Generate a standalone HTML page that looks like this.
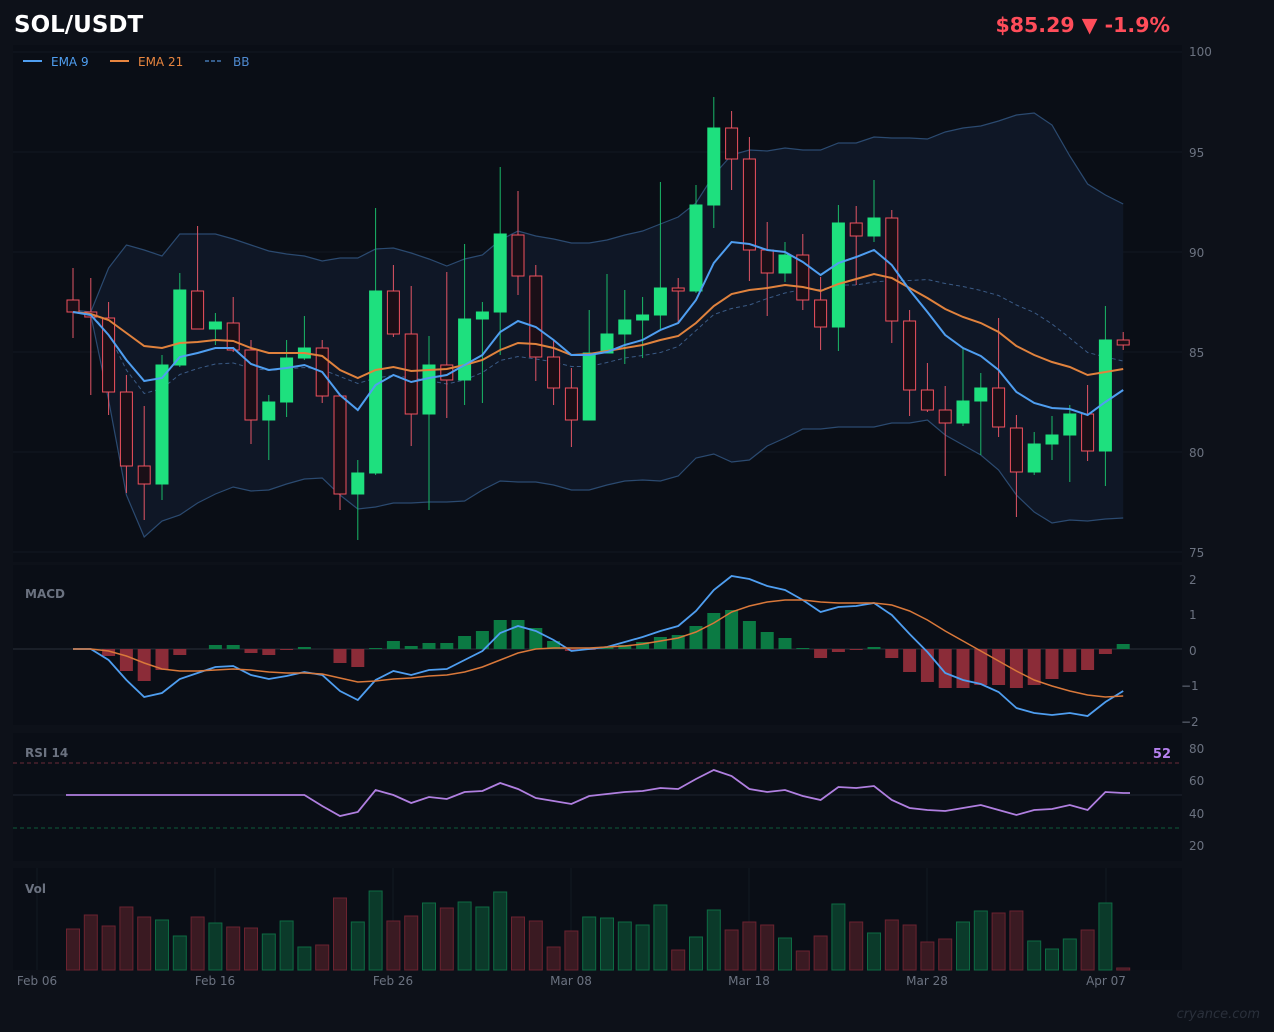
<!DOCTYPE html>
<html><head><meta charset="utf-8"><style>
html,body{margin:0;padding:0;background:#0d1119;}
body{width:1274px;height:1032px;overflow:hidden;position:relative;font-family:"Liberation Sans","DejaVu Sans",sans-serif;}
svg{position:absolute;left:0;top:0;}
</style></head><body>
<svg id="s" width="1274" height="1032" xmlns="http://www.w3.org/2000/svg" font-family="DejaVu Sans, Liberation Sans, sans-serif">
<rect x="0" y="0" width="1274" height="1032" fill="#0d1119"/>
<rect x="13" y="45" width="1169" height="517" fill="#0a0e16"/>
<rect x="13" y="565" width="1169" height="160" fill="#0a0e16"/>
<rect x="13" y="733" width="1169" height="128" fill="#0a0e16"/>
<rect x="13" y="868" width="1169" height="102" fill="#0a0e16"/>
<g id="grid"></g>
<g id="bb"></g>
<g id="cd"></g>
<g id="mac"></g>
<g id="rsi"></g>
<g id="vol"></g>
<text x="14" y="32" fill="#ffffff" font-size="23" font-weight="bold">SOL/USDT</text>
<text x="1170" y="32" fill="#ff4d5a" font-size="20.5" font-weight="bold" text-anchor="end">$85.29 ▼ -1.9%</text>
<line x1="23" y1="61" x2="42" y2="61" stroke="#4f9ef0" stroke-width="2"/>
<text x="51" y="66" fill="#4f9ef0" font-size="12">EMA 9</text>
<line x1="110" y1="61" x2="129" y2="61" stroke="#e8853f" stroke-width="2"/>
<text x="138" y="66" fill="#e8853f" font-size="12">EMA 21</text>
<line x1="205" y1="61" x2="223" y2="61" stroke="#4f8ad0" stroke-width="1.3" stroke-dasharray="4 2"/>
<text x="233" y="66" fill="#4f8ad0" font-size="12">BB</text>
<g fill="#6b7280" font-size="12">
<text x="1189" y="56">100</text><text x="1189" y="157">95</text><text x="1189" y="257">90</text><text x="1189" y="357">85</text><text x="1189" y="457">80</text><text x="1189" y="557">75</text>
<text x="1189" y="584">2</text><text x="1189" y="619">1</text><text x="1189" y="655">0</text><text x="1181" y="690">−1</text><text x="1181" y="726">−2</text>
<text x="1189" y="753">80</text><text x="1189" y="785">60</text><text x="1189" y="818">40</text><text x="1189" y="850">20</text>
<text x="37" y="985" text-anchor="middle">Feb 06</text><text x="215" y="985" text-anchor="middle">Feb 16</text><text x="393" y="985" text-anchor="middle">Feb 26</text><text x="571" y="985" text-anchor="middle">Mar 08</text><text x="749" y="985" text-anchor="middle">Mar 18</text><text x="927" y="985" text-anchor="middle">Mar 28</text><text x="1106" y="985" text-anchor="middle">Apr 07</text>
</g>
<g fill="#6b7280" font-size="12" font-weight="bold">
<text x="25" y="598">MACD</text><text x="25" y="757">RSI 14</text><text x="25" y="893">Vol</text>
</g>
<text x="1171" y="758" fill="#b681ef" font-size="13" font-weight="bold" text-anchor="end">52</text>
<text x="1260" y="1018" fill="#2a303b" font-size="13" font-style="italic" text-anchor="end">cryance.com</text>
</svg>
<script>
const X=i=>73+i*17.8;
const C=[[300,312,268,338,0],[312,317,278,395,0],[318,392,302,415,0],[392,466,375,493,0],[466,484,406,520,0],[365,484,355,500,1],[290,365,273,367,1],[291,329,226,329,0],[322,329,313,345,1],[323,350,297,352,0],[350,420,340,444,0],[402,420,395,460,1],[358,402,340,417,1],[348,358,316,360,1],[348,396,340,403,0],[396,494,394,510,0],[473,494,460,540,1],[291,473,208,475,1],[291,334,265,337,0],[334,414,286,446,0],[365,414,336,510,1],[365,380,272,418,0],[319,380,244,405,1],[312,319,302,403,1],[234,312,167,355,1],[235,276,191,295,0],[276,357,265,381,0],[357,388,340,405,0],[388,420,368,447,0],[353,420,310,420,1],[334,353,274,353,1],[320,334,290,364,1],[315,320,297,358,1],[288,315,182,330,1],[288,291,278,322,0],[205,291,185,293,1],[128,205,97,228,1],[128,159,111,190,0],[159,250,137,281,0],[250,273,222,316,0],[255,273,242,282,1],[255,300,234,310,0],[300,327,277,350,0],[223,327,205,351,1],[223,236,206,285,0],[218,236,180,242,1],[218,321,210,343,0],[321,390,310,416,0],[390,410,363,412,0],[410,423,386,476,0],[401,423,348,426,1],[388,401,373,455,1],[388,427,318,437,0],[428,472,415,517,0],[444,472,432,475,1],[435,444,416,460,1],[414,435,405,482,1],[414,451,385,461,0],[340,451,306,486,1],[340,345,332,350,0]];
const E9=[312,315,335,360,381,378,357,353,348,348,364,370,368,365,372,395,410,385,375,382,378,375,365,355,332,321,327,340,355,355,352,345,340,330,323,300,263,242,244,250,252,262,275,263,257,250,265,290,312,335,348,356,370,392,403,408,409,415,402,390];
const E21=[312,314,320,333,346,348,343,342,340,341,348,353,353,353,356,370,378,370,367,371,370,369,365,360,350,343,344,348,355,354,351,348,345,340,336,323,306,294,290,288,285,287,291,284,279,274,278,288,298,309,317,323,332,346,355,362,367,375,372,369];
const BU=[310,312,268,245,250,256,234,234,234,239,245,251,254,256,261,258,258,249,248,253,259,266,259,255,240,231,236,239,243,243,240,235,231,224,217,203,175,155,150,151,148,150,150,143,143,137,138,138,139,132,128,126,121,115,113,125,156,184,195,204];
const BL=[312,315,400,495,537,521,515,503,494,487,491,490,484,479,478,495,509,507,503,503,502,502,501,490,481,482,482,485,490,490,485,481,480,481,476,458,454,462,460,446,438,429,429,427,427,427,423,423,420,435,445,455,470,495,512,523,520,521,519,518];
const H=[649,649,656,671,681,670,655,649,645,645,653,655,650,647,649,663,667,648,641,646,643,643,636,631,620,620,628,641,651,650,647,645,642,637,635,626,613,610,621,632,638,648,658,652,650,647,658,672,682,688,688,685,685,688,685,679,672,670,654,644];
const M=[649,649,660,680,697,693,679,673,667,666,675,679,676,672,675,691,700,680,671,675,670,669,660,651,633,626,631,640,651,649,647,642,637,631,626,611,590,576,579,586,590,600,612,607,606,603,615,634,652,673,680,684,692,708,713,715,713,716,702,691];
const S=[649,649,651,656,663,669,671,671,670,669,670,672,673,673,674,678,682,681,679,678,676,675,672,667,660,653,649,648,648,648,647,646,644,641,638,632,623,612,606,602,600,600,602,603,603,603,605,611,620,631,641,651,661,671,680,686,691,695,697,696];
const R=[795,795,795,795,795,795,795,795,795,795,795,795,795,795,806,816,812,790,795,803,797,799,792,791,783,789,798,801,804,796,794,792,791,788,789,779,770,776,789,792,790,796,800,787,788,786,800,808,810,811,808,805,810,815,810,809,805,810,792,793];
const V=[929,915,926,907,917,920,936,917,923,927,928,934,921,947,945,898,922,891,921,916,903,908,902,907,892,917,921,947,931,917,918,922,925,905,950,937,910,930,922,925,938,951,936,904,922,933,920,925,942,939,922,911,913,911,941,949,939,930,903,968];
let g='',s='';
const pl=(a,c,w,d)=>'<polyline fill="none" stroke="'+c+'" stroke-width="'+w+'" '+(d?'stroke-dasharray="'+d+'"':'')+' points="'+a.map((y,i)=>X(i).toFixed(1)+','+y).join(' ')+'"/>';
[52,152,252,352,452,552].forEach(y=>g+='<line x1="13" x2="1182" y1="'+y+'" y2="'+y+'" stroke="#121823" stroke-width="1"/>');
[37,215,393,571,749,927,1106].forEach(x=>g+='<line x1="'+x+'" x2="'+x+'" y1="868" y2="970" stroke="#131923"/>');
g+='<line x1="13" x2="1182" y1="649" y2="649" stroke="#2a303b"/>';
g+='<line x1="13" x2="1182" y1="763" y2="763" stroke="#6a2a38" stroke-dasharray="4 3"/>';
g+='<line x1="13" x2="1182" y1="828" y2="828" stroke="#0f5a3a" stroke-dasharray="4 3"/>';
g+='<line x1="13" x2="1182" y1="795" y2="795" stroke="#1e2430"/>';
document.getElementById('grid').innerHTML=g;
let pts=BU.map((y,i)=>X(i).toFixed(1)+','+y).concat(BL.map((y,i)=>X(i).toFixed(1)+','+y).reverse()).join(' ');
s='<polygon points="'+pts+'" fill="#0f1726"/>';
s+=pl(BU,'#2b4a70',1.2);s+=pl(BL,'#2b4a70',1.2);
s+=pl(BU.map((u,i)=>(u+BL[i])/2),'#3a5a85',1,'4 3');
document.getElementById('bb').innerHTML=s;
s='';
C.forEach((c,i)=>{const x=X(i),up=c[4],col=up?'#1ee07e':'#f0505e',wc=up?'#19b868':'#e05565';
s+='<line x1="'+x+'" x2="'+x+'" y1="'+c[2]+'" y2="'+c[3]+'" stroke="'+wc+'" stroke-width="1"/>';
const t=Math.min(c[0],c[1]),h=Math.max(2,Math.abs(c[1]-c[0]));
s+='<rect x="'+(x-6)+'" y="'+t+'" width="12" height="'+h+'" fill="'+(up?col:'#1a0f17')+'" stroke="'+col+'" stroke-width="1"/>';});
s+=pl(E21,'#e0823d',2);s+=pl(E9,'#4f9ef0',2);
document.getElementById('cd').innerHTML=s;
s='';
H.forEach((y,i)=>{if(y==649)return;const x=X(i),t=Math.min(y,649),h=Math.abs(y-649);s+='<rect x="'+(x-6.5)+'" y="'+t+'" width="13" height="'+h+'" fill="'+(y<649?'#0b7a43':'#8b2c38')+'"/>';});
s+=pl(M,'#4f9ef0',1.8);s+=pl(S,'#d9783a',1.5);
document.getElementById('mac').innerHTML=s;
s='<polyline fill="none" stroke="#b07fe0" stroke-width="1.8" points="66,795 '+R.map((y,i)=>X(i).toFixed(1)+','+y).join(' ')+' 1130,793"/>';
document.getElementById('rsi').innerHTML=s;
s='';
V.forEach((y,i)=>{const x=X(i),up=C[i][4];s+='<rect x="'+(x-6.5)+'" y="'+y+'" width="13" height="'+(970-y)+'" fill="'+(up?'#0b3a2a':'#3a1a22')+'" stroke="'+(up?'#0d6b43':'#6b2330')+'" stroke-width="1"/>';});
document.getElementById('vol').innerHTML=s;
</script>
</body></html>
